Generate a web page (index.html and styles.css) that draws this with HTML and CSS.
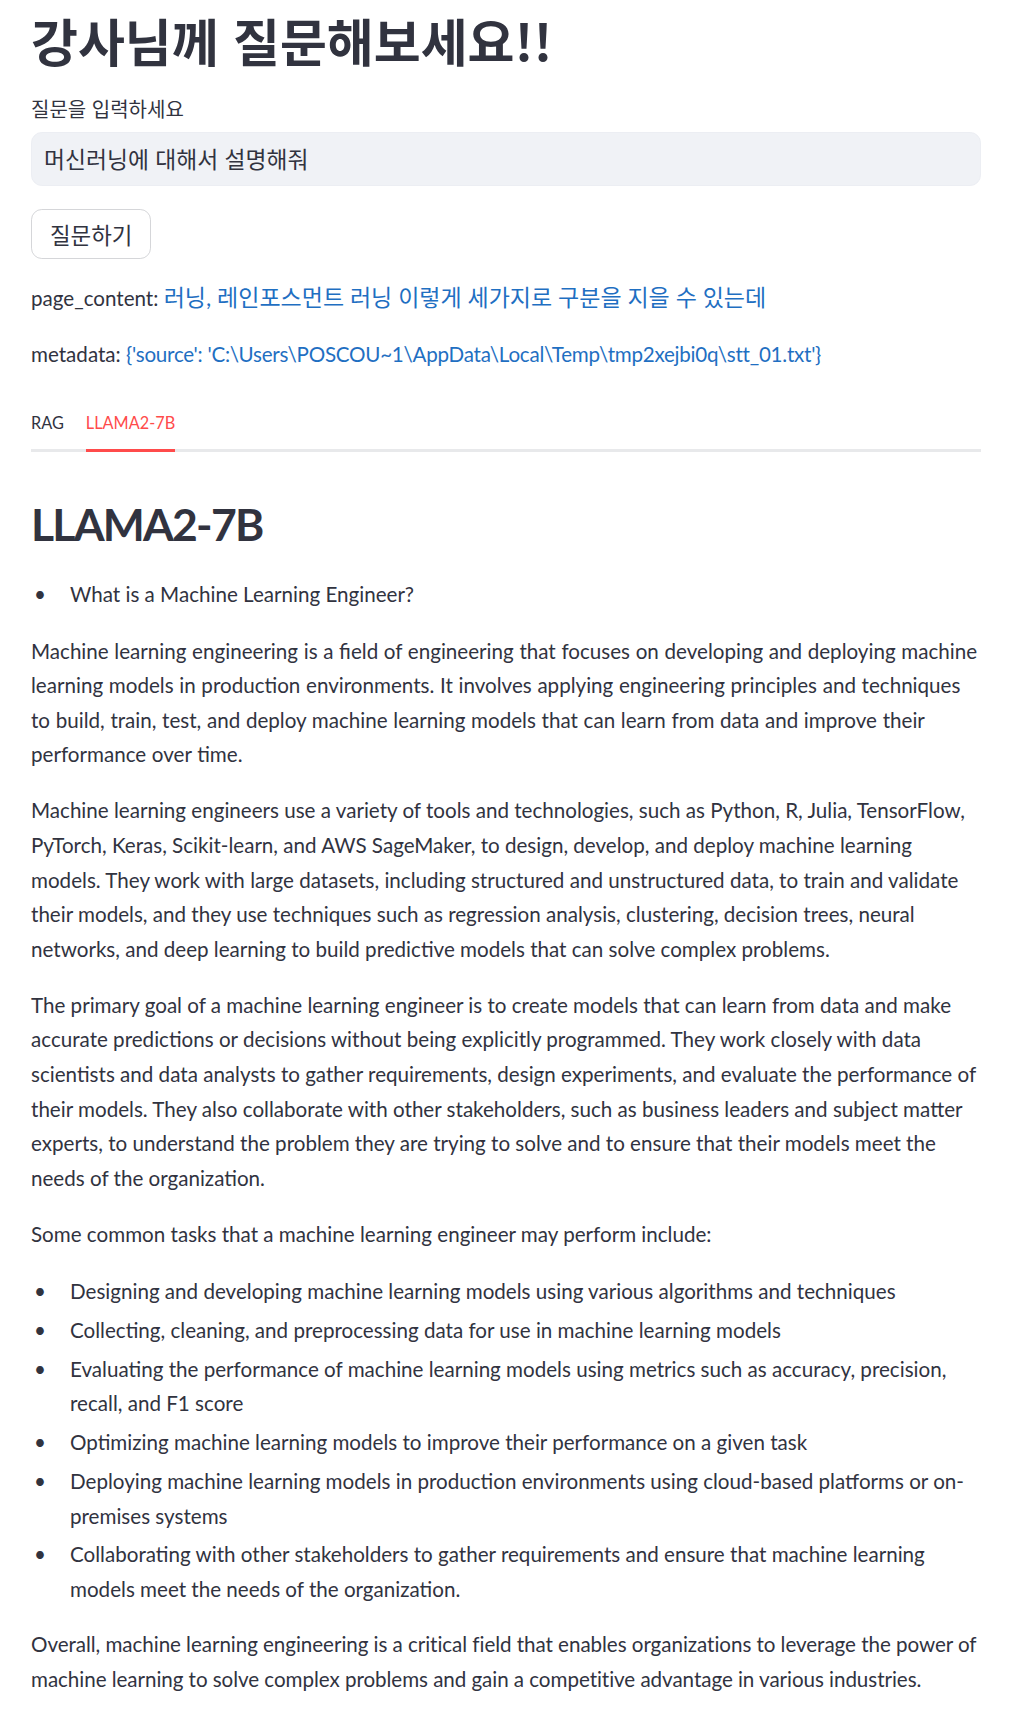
FILE: index.html
```html
<!DOCTYPE html>
<html lang="ko">
<head>
<meta charset="utf-8">
<title>강사님께 질문해보세요!!</title>
<link rel="stylesheet" href="styles.css">
</head>
<body>
<main class="main">
  <h1 class="title">강사님께 질문해보세요!!</h1>

  <label class="field-label" for="q">질문을 입력하세요</label>
  <input class="field-input" id="q" type="text" value="머신러닝에 대해서 설명해줘">

  <button class="btn" type="button">질문하기</button>

  <p class="kv kv-first">page_content: <span class="kv-value kv-ko">러닝, 레인포스먼트 러닝 이렇게 세가지로 구분을 지을 수 있는데</span></p>
  <p class="kv">metadata: <span class="kv-value kv-path">{'source': 'C:\Users\POSCOU~1\AppData\Local\Temp\tmp2xejbi0q\stt_01.txt'}</span></p>

  <nav class="tabs">
    <span class="tab">RAG</span>
    <span class="tab tab-active">LLAMA2-7B</span>
  </nav>

  <section class="answer">
    <h2 class="answer-title">LLAMA2-7B</h2>

    <ul class="bullets bullets-intro">
      <li>What is a Machine Learning Engineer?</li>
    </ul>

    <p class="para-loose">Machine learning engineering is a field of engineering that focuses on developing and deploying machine learning models in production environments. It involves applying engineering principles and techniques to build, train, test, and deploy machine learning models that can learn from data and improve their performance over time.</p>

    <p>Machine learning engineers use a variety of tools and technologies, such as Python, R, Julia, TensorFlow, PyTorch, Keras, Scikit-learn, and AWS SageMaker, to design, develop, and deploy machine learning models. They work with large datasets, including structured and unstructured data, to train and validate their models, and they use techniques such as regression analysis, clustering, decision trees, neural networks, and deep learning to build predictive models that can solve complex problems.</p>

    <p>The primary goal of a machine learning engineer is to create models that can learn from data and make accurate predictions or decisions without being explicitly programmed. They work closely with data scientists and data analysts to gather requirements, design experiments, and evaluate the performance of their models. They also collaborate with other stakeholders, such as business leaders and subject matter experts, to understand the problem they are trying to solve and to ensure that their models meet the needs of the organization.</p>

    <p>Some common tasks that a machine learning engineer may perform include:</p>

    <ul class="bullets">
      <li>Designing and developing machine learning models using various algorithms and techniques</li>
      <li>Collecting, cleaning, and preprocessing data for use in machine learning models</li>
      <li>Evaluating the performance of machine learning models using metrics such as accuracy, precision, recall, and F1 score</li>
      <li>Optimizing machine learning models to improve their performance on a given task</li>
      <li>Deploying machine learning models in production environments using cloud-based platforms or on-premises systems</li>
      <li>Collaborating with other stakeholders to gather requirements and ensure that machine learning models meet the needs of the organization.</li>
    </ul>

    <p class="para-tight">Overall, machine learning engineering is a critical field that enables organizations to leverage the power of machine learning to solve complex problems and gain a competitive advantage in various industries.</p>
  </section>
</main>
</body>
</html>
```
FILE: styles.css
```css
html, body {
  margin: 0;
  padding: 0;
  background: #ffffff;
}

body {
  color: #31333f;
  font-family: "Lato", "Noto Sans CJK KR", sans-serif;
  font-size: 20.6px;
  line-height: 34.56px;
}

.main {
  width: 950px;
  padding: 10px 0 0 31px;
  display: flex;
  flex-direction: column;
  align-items: flex-start;
}

.title {
  margin: 0;
  font-family: "Noto Sans CJK KR", sans-serif;
  font-weight: 700;
  font-size: 51px;
  line-height: 61px;
  color: #31333f;
}

.field-label {
  margin-top: 24.4px;
  font-family: "Noto Sans CJK KR", sans-serif;
  font-size: 20px;
  line-height: 27px;
  color: #31333f;
}

.field-input {
  margin: 9.6px 0 0 0;
  box-sizing: border-box;
  width: 950px;
  height: 54px;
  padding: 0 12px;
  border: 1px solid #eceef3;
  border-radius: 10.8px;
  background: #f0f2f6;
  color: #31333f;
  font-family: "Noto Sans CJK KR", sans-serif;
  font-size: 22.8px;
  outline: none;
}

.btn {
  margin-top: 23px;
  box-sizing: border-box;
  height: 50px;
  padding: 0 18px;
  background: #ffffff;
  border: 1px solid #d5d6d9;
  border-radius: 10.8px;
  color: #31333f;
  font-family: "Noto Sans CJK KR", sans-serif;
  font-size: 22.4px;
  line-height: 1;
}

.kv {
  margin: 21.6px 0 0 0;
}

.kv-first {
  margin-top: 21px;
}

.kv-value {
  color: #1f6fc2;
}

.kv-ko {
  font-size: 23px;
}

.kv-path {
  letter-spacing: -0.25px;
}

.tabs {
  margin-top: 38.8px;
  width: 950px;
  display: flex;
  gap: 22px;
  border-bottom: 3px solid #e8e9eb;
}

.tab {
  font-size: 16.3px;
  line-height: 24px;
  padding-bottom: 14.5px;
  color: #31333f;
}

.tab-active {
  color: #ff4b4b;
  border-bottom: 3px solid #ff4b4b;
  margin-bottom: -3px;
}

.answer {
  width: 950px;
}

.answer-title {
  margin: 45px 0 0 0;
  font-weight: 700;
  font-size: 44.5px;
  line-height: 53.4px;
  letter-spacing: -1.8px;
  color: #31333f;
}

.answer p {
  margin: 21.6px 0 0 0;
}

.bullets {
  list-style: none;
  margin: 22.6px 0 0 0;
  padding: 0;
}

.bullets-intro {
  margin-top: 27px;
}

.bullets + p {
  margin-top: 21px;
}

.answer .para-loose {
  margin-top: 21.6px;
  word-spacing: 0.4px;
}

.para-tight {
  letter-spacing: -0.05px;
}

.bullets li {
  display: grid;
  grid-template-columns: 39px 1fr;
}

.bullets li + li {
  margin-top: 4.3px;
}

.bullets li::before {
  content: "•";
  padding-left: 3px;
}
```
